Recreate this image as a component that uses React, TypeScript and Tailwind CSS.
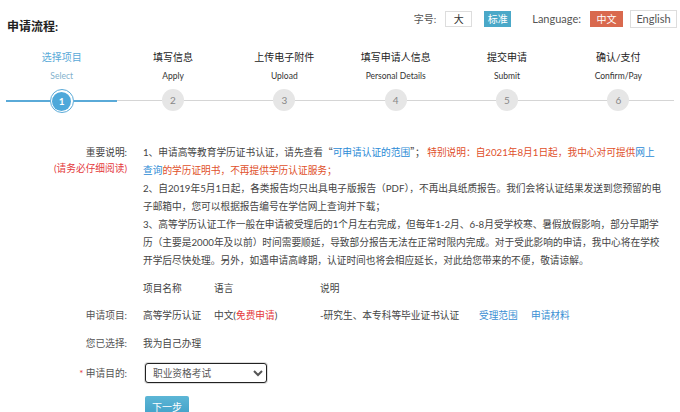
import React from 'react';

const steps = [
  { cn: '选择项目', en: 'Select' },
  { cn: '填写信息', en: 'Apply' },
  { cn: '上传电子附件', en: 'Upload' },
  { cn: '填写申请人信息', en: 'Personal Details' },
  { cn: '提交申请', en: 'Submit' },
  { cn: '确认/支付', en: 'Confirm/Pay' },
];

const App: React.FC = () => {
  return (
    <div className="w-[680px] h-[412px] overflow-hidden bg-white text-[#333] font-['Lato','Noto_Sans_CJK_SC',sans-serif]">
      {/* header */}
      <div className="flex justify-between pl-[7px] pr-[3px]">
        <div className="mt-[19px] text-[12px] leading-[16px] font-bold text-[#222]">申请流程:</div>
        <div className="mt-[11px] flex items-center h-[16px] text-[10px]">
          <span className="text-[#555]">字号:</span>
          <span className="ml-[9px] h-[16px] w-[27px] border border-[#ddd] flex items-center justify-center text-[#333]">大</span>
          <span className="ml-[12px] h-[16px] w-[27px] bg-[#4aa8c8] flex items-center justify-center text-white">标准</span>
          <span className="ml-[21px] text-[11px] text-[#555]">Language:</span>
          <span className="ml-[9px] h-[16px] w-[33px] bg-[#d9694e] flex items-center justify-center text-white">中文</span>
          <span className="ml-[7px] h-[18px] w-[47px] border border-[#ddd] flex items-center justify-center text-[11px] text-[#555]">English</span>
        </div>
      </div>

      {/* steps */}
      <div className="mt-[15px] px-[6px] grid grid-cols-6">
        {steps.map((s, i) => {
          const active = i === 0;
          return (
            <div key={s.cn} className="flex flex-col items-center">
              <div className={`text-[10px] leading-[14px] ${active ? 'text-[#5aaad8]' : 'text-[#222]'}`}>{s.cn}</div>
              <div className={`mt-[6px] text-[8.5px] leading-[12px] ${active ? 'text-[#7fb1cc]' : 'text-[#333]'}`}>{s.en}</div>
              <div className="mt-[7px] w-full flex items-center">
                <div className={`flex-1 ${active ? 'h-[2px] bg-[#5aaad8]' : 'h-px bg-[#d5d5d5]'}`} />
                {active ? (
                  <div className="w-[24px] h-[24px] rounded-full border border-[#5aaad8] bg-white flex items-center justify-center">
                    <div className="w-[19px] h-[19px] rounded-full bg-[#4ea8da] text-white text-[10px] font-bold flex items-center justify-center">1</div>
                  </div>
                ) : (
                  <div className="w-[22px] h-[22px] rounded-full bg-[#e6e6e6] text-[#888] text-[10px] flex items-center justify-center">{i + 1}</div>
                )}
                <div className={`flex-1 ${active ? 'h-[2px] bg-[#5aaad8]' : 'h-px bg-[#d5d5d5]'}`} />
              </div>
            </div>
          );
        })}
      </div>

      {/* notes */}
      <div className="mt-[30px] flex text-[9.7px]">
        <div className="w-[127px] shrink-0 text-right leading-[16px] pt-px">
          <div className="text-[#444]">重要说明:</div>
          <div className="text-[#e4393c]">(请务必仔细阅读)</div>
        </div>
        <div className="ml-[16px] w-[530px] leading-[18px] text-[#444]">
          <p>
            1、申请高等教育学历证书认证，请先查看<span className="font-['Noto_Sans_CJK_SC']">“</span>
            <span className="text-[#2b8bd6]">可申请认证的范围</span>
            <span className="font-['Noto_Sans_CJK_SC']">”；</span>
            <span className="text-[#e0502a]"> 特别说明：自2021年8月1日起，我中心对可提供</span>
            <span className="text-[#2b8bd6]">网上<br />查询</span>
            <span className="text-[#e0502a]">的学历证明书，不再提供学历认证服务；</span>
          </p>
          <p>
            2、自2019年5月1日起，各类报告均只出具电子版报告（PDF），不再出具纸质报告。我们会将认证结果发送到您预留的电<br />
            子邮箱中，您可以根据报告编号在学信网上查询并下载；
          </p>
          <p>
            3、高等学历认证工作一般在申请被受理后的1个月左右完成，但每年1-2月、6-8月受学校寒、暑假放假影响，部分早期学<br />
            历（主要是2000年及以前）时间需要顺延，导致部分报告无法在正常时限内完成。对于受此影响的申请，我中心将在学校<br />
            开学后尽快处理。另外，如遇申请高峰期，认证时间也将会相应延长，对此给您带来的不便，敬请谅解。
          </p>
        </div>
      </div>

      {/* table */}
      <div className="mt-[10px] text-[9.7px] text-[#444]">
        <div className="flex h-[18px] items-center">
          <div className="w-[127px] shrink-0" />
          <div className="ml-[16px] w-[71px]">项目名称</div>
          <div className="w-[106px]">语言</div>
          <div>说明</div>
        </div>
        <div className="mt-[9px] flex h-[18px] items-center">
          <div className="w-[127px] shrink-0 text-right text-[#555]">申请项目:</div>
          <div className="ml-[16px] w-[71px]">高等学历认证</div>
          <div className="w-[106px]">中文(<span className="text-[#e4393c]">免费申请</span>)</div>
          <div className="w-[159px]">-研究生、本专科等毕业证书认证</div>
          <a className="w-[52px] text-[#3b8fd3]">受理范围</a>
          <a className="text-[#3b8fd3]">申请材料</a>
        </div>
        <div className="mt-[10px] flex h-[18px] items-center">
          <div className="w-[127px] shrink-0 text-right text-[#555]">您已选择:</div>
          <div className="ml-[16px]">我为自己办理</div>
        </div>
        <div className="mt-[11px] flex h-[20px] items-center">
          <div className="w-[127px] shrink-0 text-right text-[#555]">
            <span className="text-[#e4393c]">*</span> 申请目的:
          </div>
          <select
            defaultValue="职业资格考试"
            className="ml-[18px] w-[122px] h-[20px] border border-[#222] rounded-[3px] px-[3px] text-[9.7px] text-[#555] bg-white shadow-[0_0_0_1px_#ddd]"
          >
            <option>职业资格考试</option>
            <option>出国留学</option>
            <option>求职就业</option>
          </select>
        </div>
        <div className="mt-[13px] flex">
          <div className="w-[127px] shrink-0" />
          <button className="ml-[18px] w-[44px] h-[22px] bg-gradient-to-b from-[#5cb6d6] to-[#3d9ec6] text-white text-[10px] rounded-[2px]">
            下一步
          </button>
        </div>
      </div>
    </div>
  );
};

export default App;
